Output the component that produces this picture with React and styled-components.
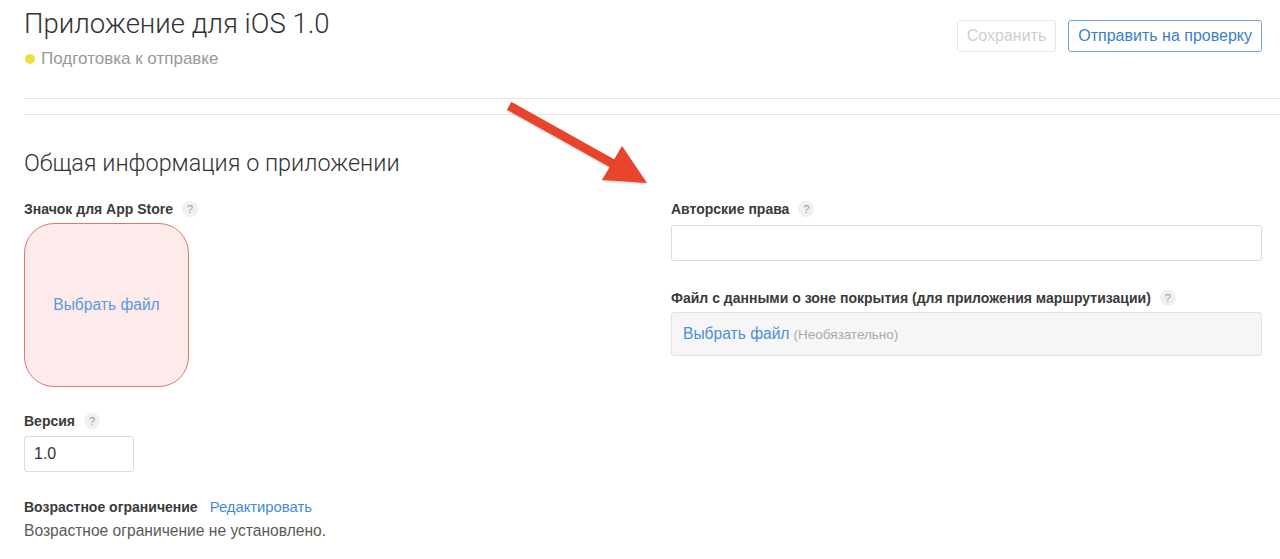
import React from 'react'
import styled, { createGlobalStyle } from 'styled-components'

const GlobalStyle = createGlobalStyle`
  html, body {
    margin: 0;
    padding: 0;
    background: #fff;
  }
  body {
    font-family: "Liberation Sans", Arial, sans-serif;
    color: #333;
  }
  * {
    box-sizing: border-box;
  }
`

const Page = styled.div`
  position: relative;
  width: 1280px;
  height: 559px;
  overflow: hidden;
  padding-left: 24px;
`

const Header = styled.header`
  display: flex;
  justify-content: space-between;
  align-items: flex-start;
  padding: 6px 18px 0 0;
`

const TitleBlock = styled.div`
  display: flex;
  flex-direction: column;
  gap: 7px;
`

const Title = styled.h1`
  margin: 0;
  font-family: "Roboto", "Liberation Sans", sans-serif;
  font-weight: 300;
  font-size: 27.5px;
  line-height: 36px;
  color: #333;
`

const Status = styled.div`
  display: flex;
  align-items: center;
  gap: 6px;
  font-size: 17px;
  line-height: 20px;
  color: #999;
`

const Dot = styled.span`
  width: 10px;
  height: 10px;
  border-radius: 50%;
  background: #f0dc3c;
  margin-left: 1px;
`

const Actions = styled.div`
  display: flex;
  gap: 12px;
  margin-top: 14px;
`

const Button = styled.button`
  height: 32px;
  padding: 0 9px;
  font-family: "Liberation Sans", Arial, sans-serif;
  font-size: 16px;
  background: #fff;
  border-radius: 3px;
  border: 1px solid ${p => (p.$primary ? '#6ea3df' : '#e6e6e6')};
  color: ${p => (p.$primary ? '#3b7fcc' : '#cfcfcf')};
`

const Divider = styled.div`
  height: 1px;
  background: #e4e4e4;
  margin-top: ${p => p.$gap}px;
`

const SectionTitle = styled.h2`
  margin: 35px 0 24px;
  font-family: "Roboto", "Liberation Sans", sans-serif;
  font-weight: 300;
  font-size: 23.4px;
  line-height: 26px;
  color: #333;
`

const Columns = styled.div`
  display: grid;
  grid-template-columns: 623px 591px;
  column-gap: 24px;
`

const Column = styled.div`
  display: flex;
  flex-direction: column;
`

const Field = styled.div`
  display: flex;
  flex-direction: column;
  margin-bottom: ${p => p.$space ?? 26}px;
`

const Label = styled.div`
  display: flex;
  align-items: center;
  gap: 9px;
  font-size: 14px;
  font-weight: 700;
  line-height: 18px;
  color: #3a3a3a;
  margin-bottom: ${p => p.$space ?? 6}px;
`

const Help = styled.span`
  display: inline-flex;
  align-items: center;
  justify-content: center;
  width: 16px;
  height: 16px;
  border-radius: 50%;
  background: #eef0f4;
  color: #9a9a9a;
  font-size: 11px;
  font-weight: 400;
`

const IconDrop = styled.div`
  width: 165px;
  height: 164px;
  border-radius: 30px;
  border: 1px solid #e0786a;
  background: #fcebea;
  display: flex;
  align-items: center;
  justify-content: center;
  font-size: 15.6px;
  color: #5a9ae0;
`

const Input = styled.div`
  width: ${p => p.$width || '100%'};
  height: 36px;
  border: 1px solid #dcdcdc;
  border-radius: 3px;
  background: #fff;
  padding: 0 9px;
  display: flex;
  align-items: center;
  font-size: 16px;
  color: #333;
`

const FileBox = styled.div`
  height: 44px;
  border: 1px solid #e3e3e3;
  border-radius: 3px;
  background: #f6f6f6;
  padding: 0 11px;
  display: flex;
  align-items: center;
  gap: 4px;
`

const Link = styled.span`
  color: ${p => (p.$strong ? '#4a8fdc' : '#3f8ae0')};
  font-size: ${p => p.$size || 15.6}px;
  font-weight: 400;
  margin-left: ${p => p.$offset || 0}px;
`

const Hint = styled.span`
  font-size: 13.5px;
  color: #aaa;
`

const Note = styled.div`
  font-size: 15.6px;
  line-height: 22px;
  color: #5a5a5a;
`

const Arrow = styled.svg`
  position: absolute;
  left: 500px;
  top: 95px;
  filter: drop-shadow(0 1px 1px rgba(0, 0, 0, 0.2));
`

export default function App() {
  return (
    <Page>
      <GlobalStyle />
      <Header>
        <TitleBlock>
          <Title>Приложение для iOS 1.0</Title>
          <Status>
            <Dot />
            Подготовка к отправке
          </Status>
        </TitleBlock>
        <Actions>
          <Button disabled>Сохранить</Button>
          <Button $primary>Отправить на проверку</Button>
        </Actions>
      </Header>

      <Divider $gap={29} />
      <Divider $gap={15} />

      <SectionTitle>Общая информация о приложении</SectionTitle>

      <Columns>
        <Column>
          <Field $space={25}>
            <Label $space={5}>
              Значок для App Store <Help>?</Help>
            </Label>
            <IconDrop>Выбрать файл</IconDrop>
          </Field>
          <Field>
            <Label>
              Версия <Help>?</Help>
            </Label>
            <Input $width="110px">1.0</Input>
          </Field>
          <Field $space={0}>
            <Label $space={4}>
              Возрастное ограничение
              <Link $size={14.8} $offset={3}>Редактировать</Link>
            </Label>
            <Note>Возрастное ограничение не установлено.</Note>
          </Field>
        </Column>

        <Column>
          <Field $space={28}>
            <Label $space={7}>
              Авторские права <Help>?</Help>
            </Label>
            <Input />
          </Field>
          <Field>
            <Label $space={5}>
              Файл с данными о зоне покрытия (для приложения маршрутизации) <Help>?</Help>
            </Label>
            <FileBox>
              <Link $strong>Выбрать файл</Link>
              <Hint>(Необязательно)</Hint>
            </FileBox>
          </Field>
        </Column>
      </Columns>

      <Arrow width="160" height="100" viewBox="0 0 160 100">
        <line x1="13" y1="13" x2="115" y2="70" stroke="#e8442b" strokeWidth="9" strokeLinecap="square" />
        <polygon points="122,51 102,85 147,88" fill="#e8442b" />
      </Arrow>
    </Page>
  )
}
